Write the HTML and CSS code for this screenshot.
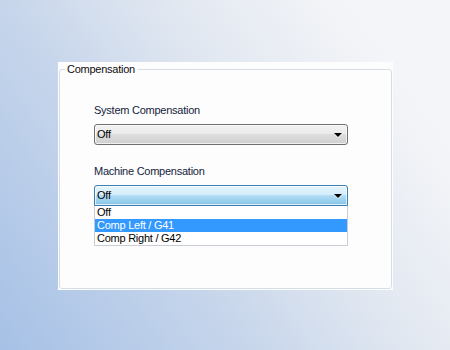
FILE: index.html
```html
<!DOCTYPE html>
<html lang="en">
<head>
    <meta charset="UTF-8">
    <meta name="viewport" content="width=device-width, initial-scale=1.0">
    <title>Compensation</title>
    <link rel="stylesheet" href="styles.css">
</head>
<body>
    <div class="panel">
        <fieldset class="group">
            <legend>Compensation</legend>

            <div class="group-body">
                <div class="field">
                    <div class="field-label">System Compensation</div>
                    <div class="combo">
                        <span class="combo-value">Off</span>
                        <span class="combo-arrow"></span>
                    </div>
                </div>

                <div class="field">
                    <div class="field-label">Machine Compensation</div>
                    <div class="combo open">
                        <span class="combo-value">Off</span>
                        <span class="combo-arrow"></span>
                    </div>
                    <ul class="combo-list">
                        <li>Off</li>
                        <li class="selected">Comp Left / G41</li>
                        <li>Comp Right / G42</li>
                    </ul>
                </div>
            </div>
        </fieldset>
    </div>
</body>
</html>
```

FILE: styles.css
```css
html, body {
    margin: 0;
    padding: 0;
    width: 450px;
    height: 350px;
}

body {
    font-family: "Liberation Sans", Arial, sans-serif;
    font-size: 11px;
    letter-spacing: -0.25px;
    color: #14233a;
    background: linear-gradient(55deg, #a6c1e6 0%, #c6d5eb 35%, #e2e8f1 60%, #f4f5f8 85%);
    overflow: hidden;
}

.panel {
    margin: 62px 0 0 58px;
    width: 335px;
    height: 228px;
    box-sizing: border-box;
    padding: 1px;
    background-color: #fdfdfe;
}

.group {
    margin: 0;
    height: 226px;
    box-sizing: border-box;
    border: 1px solid #d5dde6;
    border-radius: 3px;
    padding: 0;
}

.group legend {
    margin-left: 5px;
    padding: 0 3px 0 2px;
    line-height: 13px;
    color: #0c0c0c;
}

.group-body {
    padding: 28px 0 0 34px;
}

.field {
    margin-bottom: 20px;
}

.field-label {
    line-height: 13px;
    margin-bottom: 7px;
}

.combo {
    width: 254px;
    height: 21px;
    box-sizing: border-box;
    border: 1px solid #707070;
    border-radius: 3px;
    background: linear-gradient(#f2f2f2 0%, #ebebeb 45%, #dddddd 50%, #cfcfcf 100%);
    box-shadow: inset 0 0 0 1px rgba(255, 255, 255, 0.7);
    display: flex;
    align-items: center;
    justify-content: space-between;
    padding: 0 5px 0 2px;
    color: #000;
}

.combo.open {
    border-color: #3c7fb1;
    border-radius: 3px 3px 0 0;
    background: linear-gradient(#e6f5fd 0%, #d4eefb 45%, #b4def5 50%, #84c3e7 100%);
}

.combo-value {
    line-height: 13px;
}

.combo-arrow {
    width: 0;
    height: 0;
    border-left: 4px solid transparent;
    border-right: 4px solid transparent;
    border-top: 4px solid #000;
    filter: drop-shadow(0 1px 0 rgba(255, 255, 255, 0.8));
}

.combo-list {
    list-style: none;
    margin: 0;
    padding: 0;
    width: 254px;
    box-sizing: border-box;
    border: 1px solid #c8ccd6;
    border-top: none;
    background-color: #fff;
    color: #000;
}

.combo-list li {
    line-height: 13px;
    padding-left: 2px;
}

.combo-list li.selected {
    background-color: #3399ff;
    color: #fff;
}
```
